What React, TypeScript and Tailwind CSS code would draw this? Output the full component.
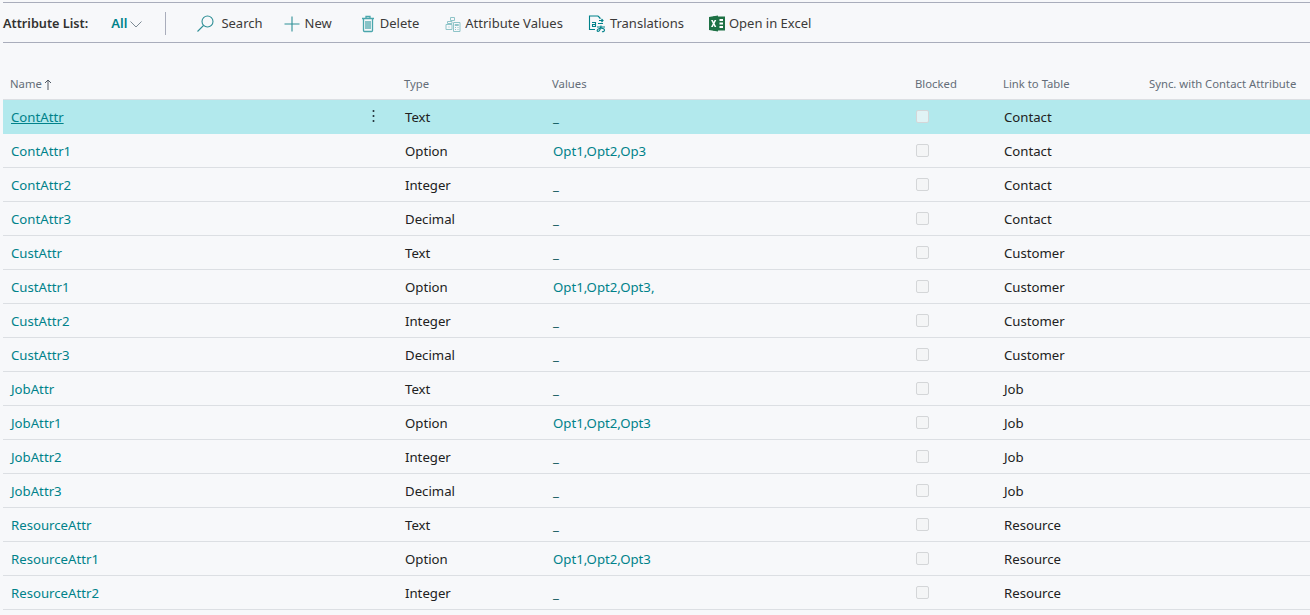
const font = "[font-family:'Noto_Sans','Open_Sans',sans-serif]";

const rows = [
  ["ContAttr", "Text", "_", "Contact"],
  ["ContAttr1", "Option", "Opt1,Opt2,Op3", "Contact"],
  ["ContAttr2", "Integer", "_", "Contact"],
  ["ContAttr3", "Decimal", "_", "Contact"],
  ["CustAttr", "Text", "_", "Customer"],
  ["CustAttr1", "Option", "Opt1,Opt2,Opt3,", "Customer"],
  ["CustAttr2", "Integer", "_", "Customer"],
  ["CustAttr3", "Decimal", "_", "Customer"],
  ["JobAttr", "Text", "_", "Job"],
  ["JobAttr1", "Option", "Opt1,Opt2,Opt3", "Job"],
  ["JobAttr2", "Integer", "_", "Job"],
  ["JobAttr3", "Decimal", "_", "Job"],
  ["ResourceAttr", "Text", "_", "Resource"],
  ["ResourceAttr1", "Option", "Opt1,Opt2,Opt3", "Resource"],
  ["ResourceAttr2", "Integer", "_", "Resource"],
];

function SearchIcon() {
  return (
    <svg width="20" height="20" viewBox="0 0 20 20" fill="none" stroke="#2f8f96" strokeWidth="1.1">
      <circle cx="11.5" cy="7.5" r="5.5" />
      <path d="M7.5 11.5L1.5 17.5" />
    </svg>
  );
}

function PlusIcon() {
  return (
    <svg width="16" height="16" viewBox="0 0 16 16" fill="none" stroke="#2f8f96" strokeWidth="1.1">
      <path d="M8 0.5V15.5M0.5 8H15.5" />
    </svg>
  );
}

function TrashIcon() {
  return (
    <svg width="14" height="18" viewBox="0 0 14 18" fill="none" stroke="#4aa6ac" strokeWidth="1.3">
      <path d="M1 3.5H13M5 3.5V1.5H9V3.5M2.5 3.5V15.5Q2.5 16.5 3.5 16.5H10.5Q11.5 16.5 11.5 15.5V3.5" />
      <path d="M5 6V14M7 6V14M9 6V14" />
    </svg>
  );
}

function AttrValuesIcon() {
  return (
    <svg width="16" height="16" viewBox="0 0 16 16" fill="none" stroke="#8fc4c8" strokeWidth="1">
      <path d="M5.5 1.5H9.5V4.5H5.5Z" />
      <path d="M2.5 5.5H7V7.5H2.5ZM1 8.5H7V13.5H1ZM3.5 11H4.5" />
      <path d="M8.5 6.5H15V15.5H8.5ZM10 8.5H13.5V9.5H10ZM10 11.5H11M12.5 11.5H13.5M10 13.5H11M12.5 13.5H13.5" />
    </svg>
  );
}

function TranslationsIcon() {
  return (
    <svg width="18" height="18" viewBox="0 0 18 18" fill="none" stroke="#00828a" strokeWidth="1.1">
      <path d="M10 1H1.5V14.5H7" />
      <path d="M10 1L12 3V4" />
      <path d="M4 7.5H7.5V11.5H4M7.5 9.5H4.5V11.5" />
      <path d="M11 5.5H15M13.5 4L15 5.5L13.5 7M10 8.5H15" />
      <path d="M9 12H17M13 10.5C13 13 11.5 16.5 10 16.5C8.5 16.5 9 14 11.5 13.5C14 13 16.5 13.5 16.5 15C16.5 16.5 15 17 14 16.5" />
    </svg>
  );
}

function ExcelIcon() {
  return (
    <svg width="16" height="17" viewBox="0 0 16 17">
      <rect x="4" y="1.5" width="12" height="14" fill="#1e7145" />
      <rect x="10.5" y="4" width="3.5" height="2" fill="#fff" />
      <rect x="10.5" y="7.5" width="3.5" height="2" fill="#fff" />
      <rect x="10.5" y="11" width="3.5" height="2" fill="#fff" />
      <path d="M0 2L9 0.5V16.5L0 15Z" fill="#1e7145" />
      <path d="M2 5H3.8L4.7 7L5.6 5H7.3L5.6 8.5L7.3 12H5.6L4.7 10L3.8 12H2L3.8 8.5Z" fill="#fff" />
    </svg>
  );
}

function ToolButton({ icon, label, className }: { icon: React.ReactNode; label: string; className: string }) {
  return (
    <div className={`flex items-center ${className}`}>
      {icon}
      <span className="text-[13px] text-[#3b3a39]">{label}</span>
    </div>
  );
}

export default function App() {
  return (
    <div className={`h-[615px] w-[1310px] overflow-hidden bg-[#f7f8fa] pt-[2px] pl-[3px] ${font}`}>
      <div className="flex h-[41px] items-center border-y border-[#a9adbb] pt-[2px]">
        <span className="text-[12.7px] font-semibold text-[#323130]">Attribute List:</span>
        <span className="ml-[23px] text-[13px] font-semibold text-[#00828a]">All</span>
        <svg className="ml-[3px] mt-[2px]" width="12" height="7" viewBox="0 0 12 7" fill="none" stroke="#7c8a94">
          <path d="M0.5 0.5L6 6L11.5 0.5" />
        </svg>
        <div className="ml-[23px] h-[23px] w-px bg-[#a9adbb]" />
        <ToolButton className="ml-[30px] gap-[5px]" icon={<SearchIcon />} label="Search" />
        <ToolButton className="ml-[21px] gap-[5px]" icon={<PlusIcon />} label="New" />
        <ToolButton className="ml-[29px] gap-[5px]" icon={<TrashIcon />} label="Delete" />
        <ToolButton className="ml-[26px] gap-[4px]" icon={<AttrValuesIcon />} label="Attribute Values" />
        <ToolButton className="ml-[25px] gap-[4px]" icon={<TranslationsIcon />} label="Translations" />
        <ToolButton className="ml-[25px] gap-[4px]" icon={<ExcelIcon />} label="Open in Excel" />
      </div>

      <div className="flex h-[57px] items-end border-b border-[#dcdfe3] pb-[6px] text-[11.3px] text-[#646d78]">
        <div className="flex w-[400px] items-center pl-[7px]">
          Name
          <svg className="ml-[2px]" width="8" height="11" viewBox="0 0 8 11" fill="none" stroke="#505864">
            <path d="M4 1V11M1 4L4 1L7 4" />
          </svg>
        </div>
        <div className="w-[149px] pl-[1px]">Type</div>
        <div className="w-[363px]">Values</div>
        <div className="w-[88px]">Blocked</div>
        <div className="w-[146px]">Link to Table</div>
        <div>Sync. with Contact Attribute</div>
      </div>

      {rows.map((row, i) => (
        <div
          key={row[0]}
          className={`flex h-[34px] items-center border-b text-[13.2px] ${
            i === 0 ? "border-[#b2e9ed] bg-[#b2e9ed]" : "border-[#dcdfe3]"
          }`}
        >
          <div className="flex w-[402px] items-center pl-[8px] text-[#00828a]">
            <span className={`pt-[2px] ${i === 0 ? "underline" : ""}`}>{row[0]}</span>
            {i === 0 && (
              <svg className="ml-auto mr-[30px]" width="3" height="14" viewBox="0 0 3 14" fill="#1f2a33">
                <circle cx="1.5" cy="2" r="1" />
                <circle cx="1.5" cy="7" r="1" />
                <circle cx="1.5" cy="12" r="1" />
              </svg>
            )}
          </div>
          <div className="w-[148px] pt-[2px] text-[#212121]">{row[1]}</div>
          <div className={`w-[363px] pt-[2px] ${row[2] === "_" ? "text-[#004f55]" : "text-[#00828a]"}`}>{row[2]}</div>
          <div className="w-[88px]">
            <div
              className={`h-[13px] w-[13px] rounded-[2px] border border-[#d4d6d8] ${
                i === 0 ? "bg-[#e0f3f5]" : "bg-[#f4f5f6]"
              }`}
            />
          </div>
          <div className="pt-[2px] text-[#212121]">{row[3]}</div>
        </div>
      ))}
    </div>
  );
}
